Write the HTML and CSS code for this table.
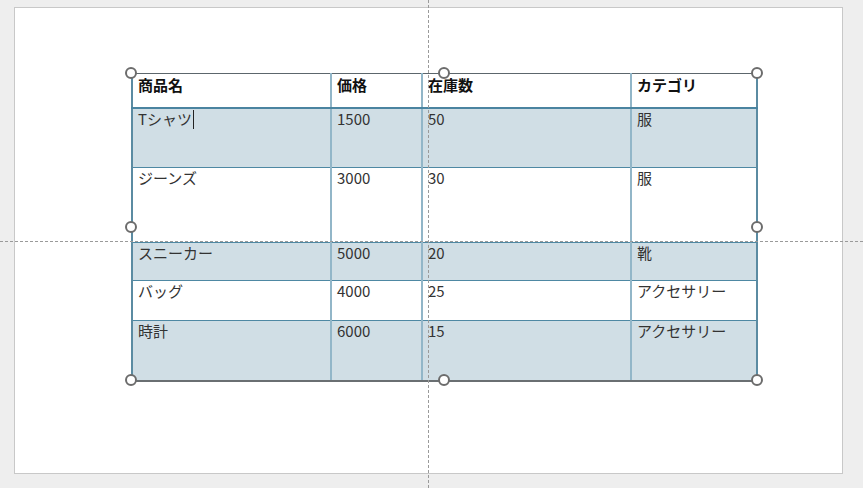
FILE: index.html
```html
<!DOCTYPE html>
<html lang="ja">
<head>
<meta charset="utf-8">
<link rel="stylesheet" href="styles.css">
</head>
<body>
<div class="stage">
  <div class="slide">
    <div class="table-wrap">
      <table class="grid">
        <colgroup>
          <col class="c1"><col class="c2"><col class="c3"><col class="c4">
        </colgroup>
        <thead>
          <tr class="hdr"><th>商品名</th><th>価格</th><th>在庫数</th><th>カテゴリ</th></tr>
        </thead>
        <tbody>
          <tr class="shade r1"><td>Tシャツ<span class="caret"></span></td><td>1500</td><td>50</td><td>服</td></tr>
          <tr class="r2"><td>ジーンズ</td><td>3000</td><td>30</td><td>服</td></tr>
          <tr class="shade r3"><td>スニーカー</td><td>5000</td><td>20</td><td>靴</td></tr>
          <tr class="r4"><td>バッグ</td><td>4000</td><td>25</td><td>アクセサリー</td></tr>
          <tr class="shade r5"><td>時計</td><td>6000</td><td>15</td><td>アクセサリー</td></tr>
        </tbody>
      </table>
      <span class="handle h-tl"></span>
      <span class="handle h-tm"></span>
      <span class="handle h-tr"></span>
      <span class="handle h-ml"></span>
      <span class="handle h-mr"></span>
      <span class="handle h-bl"></span>
      <span class="handle h-bm"></span>
      <span class="handle h-br"></span>
    </div>
  </div>
  <div class="guide guide-v"></div>
  <div class="guide guide-h"></div>
</div>
</body>
</html>
```

FILE: styles.css
```css
html, body {
  margin: 0;
  padding: 0;
  background: #eeeeee;
}
.stage {
  position: relative;
  width: 863px;
  height: 488px;
  overflow: hidden;
  padding: 7px 0 0 14px;
  box-sizing: border-box;
}
.slide {
  width: 829px;
  height: 467px;
  box-sizing: border-box;
  background: #ffffff;
  border: 1px solid #c8c8c8;
  padding: 65px 0 0 116px;
}
.table-wrap {
  position: relative;
  width: 625px;
}
.grid {
  border-collapse: collapse;
  table-layout: fixed;
  width: 625px;
  font-family: "Noto Sans CJK JP", "Noto Sans", sans-serif;
  font-size: 15px;
  line-height: 20px;
  color: #333333;
}
.c1 { width: 199px; }
.c2 { width: 91px; }
.c3 { width: 209px; }
.c4 { width: 126px; }
.grid th, .grid td {
  text-align: left;
  vertical-align: top;
  padding: 0 4px 0 5px;
  border-left: 2px solid #92b6c8;
  border-right: 2px solid #92b6c8;
  border-top: 1px solid #4e88a3;
  border-bottom: 1px solid #4e88a3;
  white-space: nowrap;
}
.grid th {
  font-weight: 700;
  color: #111111;
  padding-top: 1px;
  border-top: 1px solid #5c666c;
  border-bottom: 2px solid #4a84a0;
}
.grid th:first-child, .grid td:first-child {
  border-left: 2px solid #5b8ba2;
}
.grid th:last-child, .grid td:last-child {
  border-right: 2px solid #5b8ba2;
}
.grid tbody tr:last-child td {
  border-bottom: 2px solid #6a6f72;
}
.hdr { height: 34px; }
.r1 { height: 60px; }
.r2 { height: 75px; }
.r3 { height: 38px; }
.r4 { height: 40px; }
.r5 { height: 60px; }
.shade td { background: #d0dee5; }
.caret {
  display: inline-block;
  width: 1px;
  height: 19px;
  background: #222222;
  vertical-align: -4px;
  margin-left: 1px;
}
.handle {
  position: absolute;
  width: 8px;
  height: 8px;
  border: 2px solid #6c6c6c;
  border-radius: 50%;
  background: #ffffff;
  margin: -6px 0 0 -6px;
}
.h-tl { left: 0; top: 0; }
.h-tm { left: 313px; top: 0; }
.h-tr { left: 626px; top: 0; }
.h-ml { left: 0; top: 154px; }
.h-mr { left: 626px; top: 154px; }
.h-bl { left: 0; top: 307px; }
.h-bm { left: 313px; top: 307px; }
.h-br { left: 626px; top: 307px; }
.guide {
  position: absolute;
}
.guide-v {
  left: 428px;
  top: 0;
  width: 0;
  height: 488px;
  border-left: 1px dashed #9a9a9a;
}
.guide-h {
  left: 0;
  top: 241px;
  width: 863px;
  height: 0;
  border-top: 1px dashed #9a9a9a;
}
```
